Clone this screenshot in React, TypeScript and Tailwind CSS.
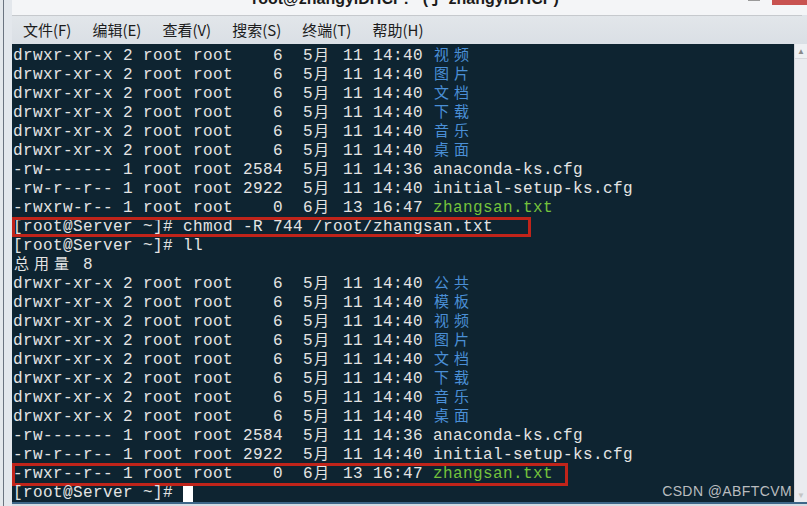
import React from 'react';

type Seg = { t: string; cls?: string };

const BLUE = 'text-[#4a8fd6]';
const GREEN = 'text-[#74c23c]';

const entry = (perm: string, links: string, size: string, mon: string, day: string, time: string, name: string, cls?: string): Seg[] => [
    { t: `${perm} ${links} root root ${size.padStart(4, ' ')}  ${mon}月 ${day} ${time} ` },
    { t: name, cls },
];

const dir = (name: string) => entry('drwxr-xr-x', '2', '6', '5', '11', '14:40', name, BLUE);

const anaconda = entry('-rw-------', '1', '2584', '5', '11', '14:36', 'anaconda-ks.cfg');
const initial = entry('-rw-r--r--', '1', '2922', '5', '11', '14:40', 'initial-setup-ks.cfg');

type Row = { segs: Seg[]; box?: 'a' | 'b'; cursor?: boolean };

const rows: Row[] = [
    { segs: dir('视频') },
    { segs: dir('图片') },
    { segs: dir('文档') },
    { segs: dir('下载') },
    { segs: dir('音乐') },
    { segs: dir('桌面') },
    { segs: anaconda },
    { segs: initial },
    { segs: entry('-rwxrw-r--', '1', '0', '6', '13', '16:47', 'zhangsan.txt', GREEN) },
    { segs: [{ t: '[root@Server ~]# chmod -R 744 /root/zhangsan.txt' }], box: 'a' },
    { segs: [{ t: '[root@Server ~]# ll' }] },
    { segs: [{ t: '总用量 8' }] },
    { segs: dir('公共') },
    { segs: dir('模板') },
    { segs: dir('视频') },
    { segs: dir('图片') },
    { segs: dir('文档') },
    { segs: dir('下载') },
    { segs: dir('音乐') },
    { segs: dir('桌面') },
    { segs: anaconda },
    { segs: initial },
    { segs: entry('-rwxr--r--', '1', '0', '6', '13', '16:47', 'zhangsan.txt', GREEN), box: 'b' },
    { segs: [{ t: '[root@Server ~]# ' }], cursor: true },
];

const isWide = (ch: string) => /[\u2e80-\u9fff\uff00-\uffef]/.test(ch);

const cjk = "inline-block tracking-normal text-[15px] font-['Noto_Sans_CJK_SC',sans-serif]";

// split a segment so every CJK glyph sits in a 2-column cell
function renderText(t: string) {
    const out: React.ReactNode[] = [];
    let buf = '';
    [...t].forEach((ch, i) => {
        if (isWide(ch)) {
            if (buf) out.push(buf);
            buf = '';
            out.push(
                <span key={i} className={`${cjk} w-[20px] pl-[1px]`}>
                    {ch}
                </span>
            );
        } else {
            buf += ch;
        }
    });
    if (buf) out.push(buf);
    return out;
}

const menus = ['文件(F)', '编辑(E)', '查看(V)', '搜索(S)', '终端(T)', '帮助(H)'];

export default function App() {
    return (
        <div className="w-[807px] h-[506px] flex bg-[#dfe4ea] overflow-hidden">
            {/* window frame, left */}
            <div className="w-[12px] flex shrink-0">
                <div className="w-[3px] bg-[#e4e8ec]" />
                <div className="w-[1px] bg-[#6b7480]" />
                <div className="flex-1 bg-[#e3e7ec]" />
            </div>

            <div className="flex-1 flex flex-col min-w-0">
                {/* title bar */}
                <div className="h-[15px] flex items-start bg-[#f4f5f7] overflow-hidden shrink-0">
                    <div className="pl-[240px] -mt-[10px] text-[16px] leading-[18px] font-bold text-[#1b1b1b] font-['Liberation_Sans','Noto_Sans_CJK_SC',sans-serif] whitespace-nowrap">
                        root@zhangyiDHCP:~ (于 zhangyiDHCP)
                    </div>
                    <div className="ml-auto flex items-start">
                        <div className="w-[12px] h-[1px] bg-[#9a9a9a] mr-[12px]" />
                        <div className="w-[35px] h-[5px] bg-[#c85250]" />
                    </div>
                </div>
                <div className="h-[1px] bg-[#c6c9cd] mr-[5px] shrink-0" />

                {/* menu bar */}
                <div className="h-[28px] flex items-center gap-[21px] pl-[11px] bg-gradient-to-b from-[#e2e6ea] to-[#dadfe5] text-[15px] text-[#1c1c1c] font-['Noto_Sans_CJK_SC',sans-serif] shrink-0">
                    {menus.map((m) => (
                        <span key={m}>{m}</span>
                    ))}
                </div>

                {/* terminal + scrollbar */}
                <div className="flex-1 flex min-h-0">
                    <div className="relative flex-1 bg-[#0e2431] overflow-hidden pl-[1px] font-['Liberation_Mono',monospace] text-[16px] tracking-[0.4px] text-[#e4e4e4]">
                        {rows.map((r, i) => (
                            <div key={i} className="relative h-[19px] leading-[19px] whitespace-pre">
                                {/* strut so ascii-only rows share the cjk baseline */}
                                <span className={`${cjk} w-0 invisible`}>一</span>
                                {r.segs.map((s, j) => (
                                    <span key={j} className={s.cls}>
                                        {renderText(s.t)}
                                    </span>
                                ))}
                                {r.cursor && <span className="inline-block w-[10px] h-[17px] bg-white align-[-6px]" />}
                                {r.box === 'a' && (
                                    <div className="absolute left-[-1px] top-[2px] w-[519px] h-[20px] border-[3px] border-[#c0241a]" />
                                )}
                                {r.box === 'b' && (
                                    <div className="absolute left-[-1px] top-[1px] w-[556px] h-[23px] border-[3px] border-[#c0241a]" />
                                )}
                            </div>
                        ))}
                        <div className="absolute right-[2px] bottom-[3px] text-[14px] leading-[16px] text-[#b9bcbf] font-['Liberation_Sans',sans-serif]">
                            CSDN @ABFTCVM
                        </div>
                    </div>

                    {/* scrollbar */}
                    <div className="w-[13px] flex flex-col bg-[#eaebef] border-l border-[#d6d8dd] shrink-0">
                        <div className="h-[15px] flex items-center justify-center text-[8px] text-[#8a8a8a] border-b border-[#d8d9de] bg-[#eef0f3]">
                            ▲
                        </div>
                        <div className="flex-1" />
                        <div className="h-[15px] flex items-center justify-center text-[8px] text-[#c4c4c4]">
                            ▼
                        </div>
                    </div>
                </div>

                {/* bottom frame */}
                <div className="h-[4px] flex flex-col shrink-0">
                    <div className="h-[2px] bg-[#3d6688]" />
                    <div className="flex-1 bg-[#d6dce3]" />
                </div>
            </div>
        </div>
    );
}
